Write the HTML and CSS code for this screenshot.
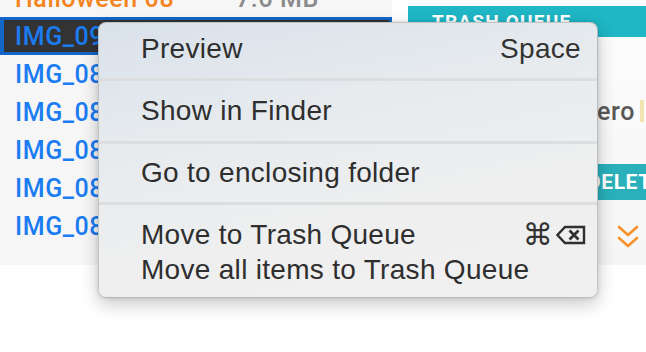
FILE: index.html
```html
<!DOCTYPE html>
<html lang="en">
<head>
  <meta charset="UTF-8" />
  <title>Photo list - context menu</title>
  <link rel="stylesheet" href="styles.css">
</head>
<body>
  <div class="app">
    <div class="list">
      <div class="row">
        <span class="name orange">Halloween 08 -</span>
        <span class="size">7.6 MB</span>
      </div>
      <div class="row selected">
        <span class="name">IMG_0932.JPG</span>
      </div>
      <div class="row"><span class="name">IMG_0881.JPG</span></div>
      <div class="row"><span class="name">IMG_0882.JPG</span></div>
      <div class="row"><span class="name">IMG_0883.JPG</span></div>
      <div class="row"><span class="name">IMG_0884.JPG</span></div>
      <div class="row"><span class="name">IMG_0885.JPG</span></div>
    </div>

    <div class="gutter"></div>

    <div class="queue">
      <div class="queue-head">TRASH QUEUE</div>
      <div class="queue-file">
        <span>Zero</span>
        <span class="flag"></span>
      </div>
      <div class="delete-bar">DELETE</div>
      <div class="expand">
        <svg width="22" height="24" viewBox="0 0 22 24">
          <polyline points="2,2 11,10 20,2" fill="none" stroke="#f7922a" stroke-width="2.6" stroke-linecap="round" stroke-linejoin="round"/>
          <polyline points="2,13 11,21 20,13" fill="none" stroke="#f7922a" stroke-width="2.6" stroke-linecap="round" stroke-linejoin="round"/>
        </svg>
      </div>
    </div>
  </div>

  <!-- context menu over the list -->
  <div class="menu">
    <div class="section first">
      <div class="item">
        <span>Preview</span>
        <span class="key">Space</span>
      </div>
    </div>
    <div class="section second">
      <div class="item"><span>Show in Finder</span></div>
    </div>
    <div class="section third">
      <div class="item"><span>Go to enclosing folder</span></div>
    </div>
    <div class="section last">
      <div class="item">
        <span>Move to Trash Queue</span>
        <span class="key shortcut">
          <span class="cmd">&#8984;</span>
          <svg width="30" height="20" viewBox="0 0 30 20">
            <path d="M9 2 H28 V18 H9 L1.5 10 Z" fill="none" stroke="#2f2f2f" stroke-width="2.4" stroke-linejoin="miter"/>
            <path d="M13.5 5.5 L22.5 14.5 M22.5 5.5 L13.5 14.5" stroke="#2f2f2f" stroke-width="2.8"/>
          </svg>
        </span>
      </div>
      <div class="item"><span>Move all items to Trash Queue</span></div>
    </div>
  </div>
</body>
</html>
```

FILE: styles.css
```css
body {
  margin: 0;
  background: #fff;
  font-family: 'Liberation Sans', Arial, sans-serif;
  overflow: hidden;
}

.app {
  display: flex;
  height: 265px;
}

.list {
  flex: 0 0 392px;
  background: #f6f6f6;
  overflow: hidden;
}

.row {
  display: flex;
  align-items: center;
  height: 38px;
  box-sizing: border-box;
  padding-left: 15px;
  font-family: Roboto, 'DejaVu Sans', sans-serif;
  font-weight: 500;
  font-size: 25px;
  letter-spacing: 0.6px;
  color: #1b7cf2;
  white-space: nowrap;
}

.row:first-child {
  margin-top: -21px;
}

.row .name {
  width: 221px;
}

.row .orange {
  color: #f5841f;
}

.row .size {
  color: #8a8a8a;
}

.row.selected {
  background: #333;
  border: 3px solid #1466c8;
  border-left-width: 4px;
  padding-left: 11px;
}

.gutter {
  flex: 0 0 16px;
  background: #fff;
}

.queue {
  flex: 1;
  min-width: 0;
  display: flex;
  flex-direction: column;
  padding-top: 6px;
  background: linear-gradient(#fdfdfd, #f5f5f5);
  overflow: hidden;
}

.queue-head {
  height: 31px;
  line-height: 31px;
  padding-left: 24px;
  background: #1fb6c5;
  color: #fff;
  font-family: Roboto, sans-serif;
  font-weight: 700;
  font-size: 19px;
  letter-spacing: 1.2px;
  white-space: nowrap;
}

.queue-file {
  display: flex;
  align-items: center;
  justify-content: flex-end;
  height: 38px;
  margin-top: 55px;
  padding-right: 2px;
  gap: 5px;
  font-family: Roboto, sans-serif;
  font-weight: 500;
  font-size: 25px;
  letter-spacing: 0.6px;
  color: #585858;
}

.queue-file .flag {
  width: 4px;
  height: 22px;
  background: #f1e4b0;
}

.delete-bar {
  height: 36px;
  line-height: 36px;
  margin-top: 34px;
  padding-left: 179px;
  background: #29b0ba;
  color: #fff;
  font-family: Roboto, sans-serif;
  font-weight: 700;
  font-size: 21px;
  letter-spacing: 0.6px;
  white-space: nowrap;
}

.expand {
  margin-top: 25px;
  padding-left: 209px;
  line-height: 0;
}

.menu {
  position: absolute;
  left: 98px;
  top: 22px;
  width: 500px;
  height: 276px;
  box-sizing: border-box;
  border: 1px solid rgba(0, 0, 0, 0.18);
  border-radius: 8px;
  overflow: hidden;
  background: linear-gradient(168deg, #d9e1ea 0%, #e7ebee 35%, #efefef 70%, #f0f0f0 100%);
  box-shadow: 0 6px 18px rgba(0, 0, 0, 0.22), 0 0 4px rgba(0, 0, 0, 0.12);
  color: #2e2e2e;
  font-size: 28px;
  letter-spacing: 0.3px;
}

.section {
  display: flex;
  flex-direction: column;
  justify-content: center;
  box-sizing: border-box;
  border-bottom: 3px solid #dbdddf;
}

.section.first {
  height: 58px;
  padding-bottom: 3px;
}

.section.second {
  height: 63px;
}

.section.third {
  height: 61px;
}

.section.last {
  border-bottom: 0;
  justify-content: flex-start;
  padding-top: 12px;
}

.item {
  display: flex;
  justify-content: space-between;
  align-items: center;
  height: 35px;
  padding: 0 16px 0 42px;
}

.key {
  color: #333;
}

.shortcut {
  display: flex;
  align-items: center;
  gap: 3px;
  margin-right: -5px;
}

.cmd {
  font-family: 'DejaVu Sans', sans-serif;
  font-size: 30px;
  line-height: 1;
}
```
